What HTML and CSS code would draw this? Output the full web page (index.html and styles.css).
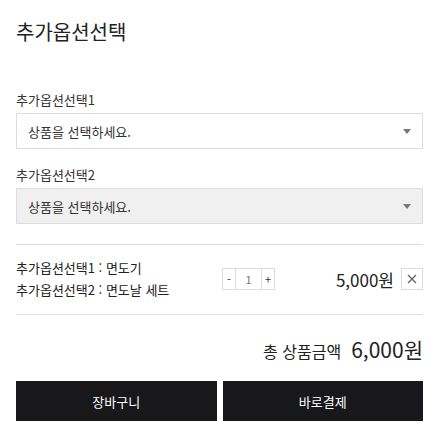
FILE: index.html
```html
<!DOCTYPE html>
<html lang="ko">
<head>
    <meta charset="UTF-8">
    <meta name="viewport" content="width=device-width, initial-scale=1.0">
    <title>추가옵션선택</title>
    <link rel="stylesheet" href="styles.css">
</head>
<body>
    <div class="option-panel">
        <h2 class="panel-title">추가옵션선택</h2>

        <!-- Option selects -->
        <div class="option-group">
            <label class="option-label">추가옵션선택1</label>
            <div class="option-select">
                <span>상품을 선택하세요.</span>
                <span class="arrow"></span>
            </div>
        </div>
        <div class="option-group">
            <label class="option-label">추가옵션선택2</label>
            <div class="option-select disabled">
                <span>상품을 선택하세요.</span>
                <span class="arrow"></span>
            </div>
        </div>

        <!-- Selected item -->
        <div class="selected-item">
            <div class="item-names">
                <p>추가옵션선택1 : 면도기</p>
                <p>추가옵션선택2 : 면도날 세트</p>
            </div>
            <div class="qty">
                <button class="qty-btn">-</button>
                <span class="qty-value">1</span>
                <button class="qty-btn">+</button>
            </div>
            <div class="item-price">5,000원</div>
            <button class="remove-btn">
                <svg width="10" height="10" viewBox="0 0 10 10"><path d="M1 1L9 9M9 1L1 9" stroke="#666" stroke-width="1.4"/></svg>
            </button>
        </div>

        <!-- Total -->
        <div class="total-row">
            <span class="total-label">총 상품금액</span>
            <span class="total-price">6,000원</span>
        </div>

        <div class="actions">
            <button class="action-btn">장바구니</button>
            <button class="action-btn">바로결제</button>
        </div>
    </div>
</body>
</html>
```

FILE: styles.css
```css
/* General body styles */
body {
    margin: 0;
    background: #ffffff;
    font-family: "Noto Sans CJK KR", "Noto Sans", sans-serif;
    color: #222222;
}

.option-panel {
    padding: 17px 16px 0 16px;
}

/* Title */
.panel-title {
    margin: 0 0 43px 0;
    font-size: 20px;
    line-height: 30px;
    font-weight: 400;
    color: #222222;
}

/* Option groups */
.option-group {
    margin-bottom: 16px;
}

.option-label {
    display: block;
    font-size: 13px;
    line-height: 20px;
    margin-bottom: 3px;
    color: #333333;
}

.option-select {
    height: 36px;
    box-sizing: border-box;
    border: 1px solid #dddddd;
    background: #ffffff;
    display: flex;
    align-items: center;
    justify-content: space-between;
    padding: 0 11px 0 11px;
    font-size: 13px;
    color: #333333;
}

.option-select.disabled {
    background: #f0f0f0;
}

/* Small down triangle */
.arrow {
    width: 0;
    height: 0;
    border-left: 4px solid transparent;
    border-right: 4px solid transparent;
    border-top: 5px solid #777777;
}

/* Selected item row */
.selected-item {
    margin-top: 20px;
    border-top: 1px solid #dddddd;
    border-bottom: 1px solid #dddddd;
    padding: 12px 0 13px 0;
    display: flex;
    align-items: center;
}

.item-names {
    flex: 0 0 206px;
}

.item-names p {
    margin: 0;
    font-size: 13px;
    line-height: 22px;
    color: #222222;
}

.qty {
    display: flex;
    height: 22px;
    border: 1px solid #dddddd;
    box-sizing: border-box;
}

.qty-btn {
    width: 12px;
    padding: 0;
    border: none;
    background: #ffffff;
    font-family: inherit;
    font-size: 11px;
    color: #333333;
    line-height: 20px;
}

.qty-value {
    width: 25px;
    border-left: 1px solid #dddddd;
    border-right: 1px solid #dddddd;
    text-align: center;
    font-size: 11px;
    line-height: 20px;
    color: #777777;
}

.item-price {
    flex: 1;
    text-align: right;
    font-size: 17px;
    color: #222222;
    margin-right: 7px;
}

.remove-btn {
    width: 22px;
    height: 22px;
    padding: 0;
    border: 1px solid #dddddd;
    background: #ffffff;
    display: flex;
    align-items: center;
    justify-content: center;
}

/* Total */
.total-row {
    display: flex;
    justify-content: flex-end;
    align-items: baseline;
    margin: 19px 0 17px 0;
    height: 30px;
}

.total-label {
    font-size: 16px;
    margin-right: 10px;
}

.total-price {
    font-size: 21px;
    font-weight: 400;
}

/* Buttons */
.actions {
    display: flex;
    gap: 6px;
}

.action-btn {
    flex: 1;
    height: 40px;
    border: none;
    background: #18181b;
    color: #ffffff;
    font-family: inherit;
    font-size: 13px;
}
```
